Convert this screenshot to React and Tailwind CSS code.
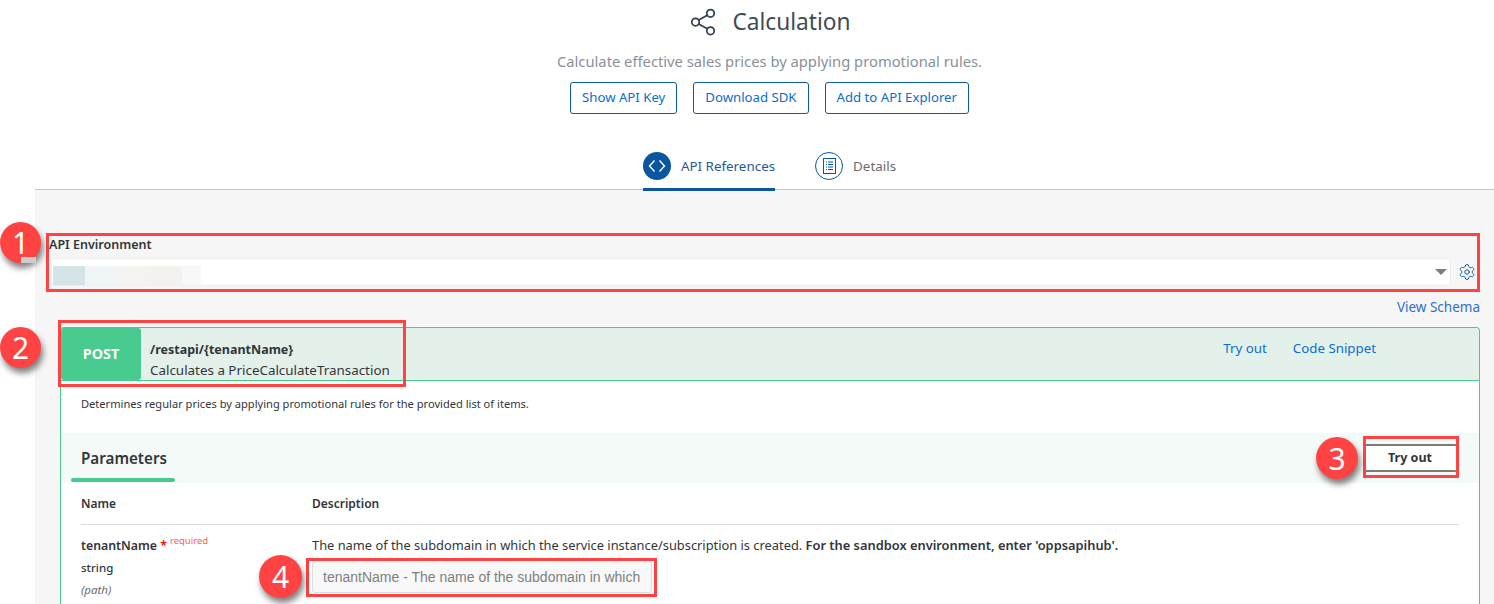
import { Share2, Settings } from 'lucide-react'

const font = { fontFamily: '"Noto Sans", sans-serif' }

function HeaderButton({ children }) {
  return (
    <button className="h-8 px-[11px] rounded-[3px] border border-[#0a5aa5] bg-white text-[13.2px] text-[#0a6ed1] leading-none whitespace-nowrap">
      {children}
    </button>
  )
}

function CodeIcon() {
  return (
    <span className="w-7 h-7 rounded-full bg-[#0a56a0] flex items-center justify-center">
      <svg width="18" height="14" viewBox="0 0 18 14" fill="none" stroke="white" strokeWidth="1.4">
        <path d="M6.5 1.5 1.5 7l5 5.5M11.5 1.5l5 5.5-5 5.5" />
      </svg>
    </span>
  )
}

function DetailsIcon() {
  return (
    <span className="w-7 h-7 rounded-full border border-[#0a56a0] flex items-center justify-center">
      <svg width="13" height="16" viewBox="0 0 13 16" fill="none" stroke="#0a56a0" strokeWidth="1">
        <rect x="0.5" y="0.5" width="12" height="15" />
        <path d="M3 4h1M5 4h5M3 6.5h1M5 6.5h5M3 9h1M5 9h5M3 11.5h1M5 11.5h5" />
      </svg>
    </span>
  )
}

function Badge({ n, className }) {
  return (
    <div className={`absolute rounded-full bg-[#ff4343] text-white flex items-center justify-center shadow-[2px_5px_6px_rgba(0,0,0,0.5)] ${className}`}>
      {n}
    </div>
  )
}

export default function App() {
  return (
    <div className="relative h-[604px] overflow-hidden bg-white text-[#32363a]" style={font}>
      {/* title block, the active tab underline hangs over the gray area's top border */}
      <div className="relative z-10 h-[191px] -mb-[2px] pl-[45px] flex flex-col items-center">
        <div className="flex items-center h-[44px] gap-[14px]">
          <Share2 size={30} strokeWidth={1.4} className="text-[#32404f]" />
          <span className="text-[22.7px] text-[#3f4b57] leading-none">Calculation</span>
        </div>
        <p className="mt-[8px] text-[14.75px] leading-[18px] text-[#89919a]">
          Calculate effective sales prices by applying promotional rules.
        </p>
        <div className="mt-[12px] flex gap-[16px]">
          <HeaderButton>Show API Key</HeaderButton>
          <HeaderButton>Download SDK</HeaderButton>
          <HeaderButton>Add to API Explorer</HeaderButton>
        </div>
        <div className="mt-[38px] flex gap-[40px]">
          <div className="h-[39px] flex items-center gap-[10px] border-b-[3px] border-[#0a56a0] pb-[8px]">
            <CodeIcon />
            <span className="text-[13.4px] text-[#1f5a9c]">API References</span>
          </div>
          <div className="h-[39px] flex items-center gap-[10px] border-b-[3px] border-transparent pb-[8px]">
            <DetailsIcon />
            <span className="text-[13.4px] text-[#6a6d70]">Details</span>
          </div>
        </div>
      </div>

      {/* gray content area */}
      <div className="ml-[35px] h-[415px] border-t border-[#c8c8c8] bg-[#f6f6f6] pt-[46px] pr-[14px]">
        <div className="pl-[14px] text-[12.5px] font-semibold leading-[18px] text-[#32363a]">API Environment</div>
        <div className="mt-[4px] flex items-center pl-[16px]">
          <div className="flex-1 h-[28px] rounded-[3px] border border-[#eeeeee] bg-white flex items-end pl-px relative">
            <div className="flex h-[19px] w-[148px]">
              <div className="w-[32px] bg-[#d5e4e9]" />
              <div className="w-[33px] bg-[#eff4f6]" />
              <div className="w-[32px] bg-[#f4f3ef]" />
              <div className="w-[32px] bg-[#f3f2ef]" />
              <div className="w-[19px] bg-[#f8f8f8]" />
            </div>
            <div className="absolute right-[3px] top-[10px] w-0 h-0 border-x-[6px] border-x-transparent border-t-[6px] border-t-[#7d7d7d]" />
          </div>
          <Settings size={18} strokeWidth={1.3} className="ml-[7px] mr-[4px] text-[#0a5aa5]" />
        </div>
        <div className="mt-[12px] text-right text-[13.5px] leading-[18px] text-[#2f6fd0]">View Schema</div>

        {/* POST card */}
        <div className="mt-[11px] ml-[25px] h-[300px] rounded-t-[4px] border-x border-t border-[#48cc8c] bg-white">
          <div className="h-[53px] flex bg-[#e3f1ea] border-b border-[#48cc8c] rounded-t-[4px]">
            <div className="w-[80px] pb-px rounded-[3px] bg-[#48cb8e] flex items-center justify-center text-white text-[14.3px] font-bold">POST</div>
            <div className="pl-[9px] pt-[13px] w-[300px]">
              <div className="text-[12.5px] font-bold leading-[18px]">/restapi/{'{tenantName}'}</div>
              <div className="mt-[2px] text-[13.4px] leading-[18px] whitespace-nowrap">Calculates a PriceCalculateTransaction</div>
            </div>
            <div className="ml-auto flex gap-[26px] pt-[11px] pr-[103px] text-[13.3px] leading-[18px] text-[#0a6ed1]">
              <span>Try out</span>
              <span>Code Snippet</span>
            </div>
          </div>
          <div className="h-[52px] pl-[20px] pt-[14px] text-[11.1px] leading-[18px]">
            Determines regular prices by applying promotional rules for the provided list of items.
          </div>
          <div className="h-[50px] bg-[#f4faf8] flex items-start justify-between pl-[10px] pr-[22px]">
            <div className="w-[104px] h-[50px] pl-[10px] pt-[15px] relative text-[15.2px] font-semibold leading-[20px]">
              Parameters
              <div className="absolute left-0 bottom-[1px] w-full h-[4px] rounded-[2px] bg-[#48cb8e]" />
            </div>
            <button className="mt-[11px] w-[93px] h-[28px] bg-white border-y-2 border-r border-[#7b7b7b] rounded-[2px] text-[12.5px] font-bold text-[#32363a]">
              Try out
            </button>
          </div>
          <div className="mx-[20px]">
            <div className="flex h-[42px] items-center border-b border-[#dcdcdc] text-[12px] font-semibold">
              <span className="w-[231px]">Name</span>
              <span>Description</span>
            </div>
            <div className="flex pt-[9px]">
              <div className="w-[231px] -mt-[2px]">
                <div className="text-[12.3px] font-semibold leading-[18px]">
                  tenantName <span className="text-[#ff0000]">*</span>
                  <span className="ml-[3px] text-[9.5px] font-normal text-[#ff5a5a] align-[6px]">required</span>
                </div>
                <div className="mt-[4px] text-[11.5px] font-medium leading-[18px]">string</div>
                <div className="mt-[4px] text-[11.5px] italic leading-[18px] text-[#6a6d70]">(path)</div>
              </div>
              <div className="mt-[2px]">
                <div className="text-[12.85px] leading-[18px] whitespace-nowrap">
                  The name of the subdomain in which the service instance/subscription is created.{' '}
                  <b className="font-semibold">For the sandbox environment, enter 'oppsapihub'.</b>
                </div>
                <input
                  readOnly
                  placeholder="tenantName - The name of the subdomain in which"
                  className="mt-[6px] w-[340px] h-[33px] px-[10px] rounded-[3px] border border-[#dddddd] bg-[#f8f8f8] text-[14px] placeholder:text-[#7f7f7f]"
                  style={{ fontFamily: '"Liberation Sans", sans-serif' }}
                />
              </div>
            </div>
          </div>
        </div>
      </div>

      {/* callouts drawn over the page */}
      <div className="absolute z-20 left-[46px] top-[233px] w-[1434px] h-[59px] border-[3px] border-[#ff4343]" />
      <div className="absolute z-20 left-[58px] top-[320px] w-[348px] h-[67px] border-[3px] border-[#ff4343]" />
      <div className="absolute z-20 left-[1363px] top-[436px] w-[96px] h-[42px] border-[3px] border-[#ff4343]" />
      <div className="absolute z-20 left-[306px] top-[558px] w-[351px] h-[39px] border-[3px] border-[#ff4343]" />
      <Badge n="1" className="z-20 left-0 top-[222px] w-[41px] h-[41px] text-[30px]" />
      <div className="absolute z-20 left-[21px] top-[257px] w-[15px] h-[6px] bg-[#cccccc]" />
      <Badge n="2" className="z-20 left-0 top-[327px] w-[41px] h-[41px] text-[30px]" />
      <Badge n="3" className="z-20 left-[1316px] top-[437px] w-[42px] h-[42px] text-[30px]" />
      <Badge n="4" className="z-20 left-[259px] top-[555px] w-[43px] h-[43px] text-[30px]" />
    </div>
  )
}
